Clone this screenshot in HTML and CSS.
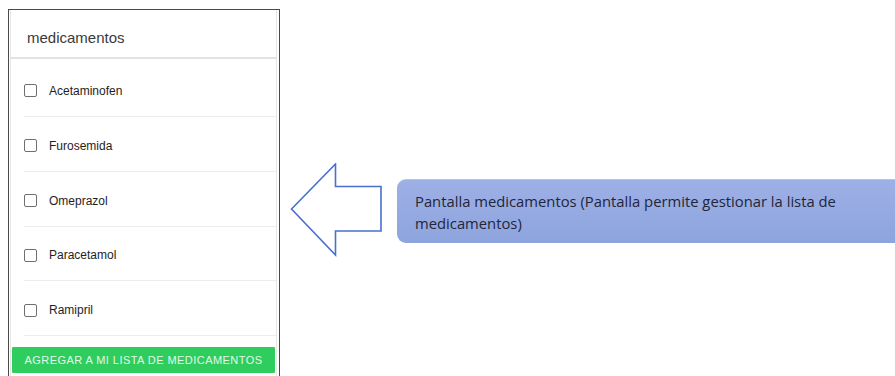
FILE: index.html
```html
<!DOCTYPE html>
<html lang="es">
<head>
<meta charset="utf-8">
<title>Pantalla medicamentos</title>
<link rel="stylesheet" href="styles.css">
</head>
<body>
<div class="stage">
  <div class="phone">
    <div class="panel">
      <div class="header">medicamentos</div>
      <ul class="list">
        <li class="item"><span class="box"></span><span class="label">Acetaminofen</span></li>
        <li class="item"><span class="box"></span><span class="label">Furosemida</span></li>
        <li class="item"><span class="box"></span><span class="label">Omeprazol</span></li>
        <li class="item"><span class="box"></span><span class="label">Paracetamol</span></li>
        <li class="item"><span class="box"></span><span class="label">Ramipril</span></li>
      </ul>
      <div class="btn">AGREGAR A MI LISTA DE MEDICAMENTOS</div>
    </div>
  </div>
  <svg class="arrow" width="96" height="96" viewBox="0 0 96 96">
    <polygon points="1.5,46 45.5,1 45.5,23.5 91,23.5 91,68 45.5,68 45.5,92" fill="#ffffff" stroke="#4a6fd0" stroke-width="1.6" stroke-linejoin="miter"/>
  </svg>
  <div class="callout">Pantalla medicamentos (Pantalla permite gestionar la lista de medicamentos)</div>
</div>
</body>
</html>
```

FILE: styles.css
```css
html, body {
  margin: 0;
  padding: 0;
  background: #ffffff;
  overflow: hidden;
}
.stage {
  width: 895px;
  height: 376px;
  display: flex;
  align-items: flex-start;
}
.phone {
  margin-left: 8px;
  margin-top: 9px;
  width: 267px;
  height: 380px;
  border: 1.5px solid #4a4a4a;
  border-bottom: none;
  padding: 0 2px 0 1px;
  flex: none;
}
.panel {
  height: 100%;
  background: #fff;
  border-left: 1px solid #e6e6e6;
  border-right: 1px solid #e6e6e6;
  font-family: "Liberation Sans", Arial, sans-serif;
  display: flex;
  flex-direction: column;
}
.header {
  height: 49px;
  box-sizing: border-box;
  padding: 19px 0 0 16px;
  font-size: 15px;
  color: #3a3a3a;
  border-bottom: 2px solid #e2e2e2;
  line-height: 17px;
}
.list {
  list-style: none;
  margin: 0;
  padding: 0 0 0 13px;
}
.item {
  height: 54.75px;
  border-bottom: 1px solid #ececec;
  display: flex;
  align-items: center;
  padding-top: 4px;
  box-sizing: border-box;
}
.item:first-child {
  height: 58px;
  padding-top: 6px;
}
.box {
  width: 13px;
  height: 13px;
  box-sizing: border-box;
  border: 1.5px solid #6f6f6f;
  border-radius: 2px;
  margin-left: 0;
  margin-right: 12px;
  flex: none;
}
.label {
  font-size: 12px;
  color: #1e1e1e;
}
.btn {
  margin: 11px 1px 0 1px;
  height: 26px;
  background: #2fcc5e;
  color: #e3f9ea;
  font-size: 11px;
  letter-spacing: 0.45px;
  display: flex;
  align-items: center;
  justify-content: center;
  border-radius: 1px;
}
.arrow {
  margin-left: 10px;
  margin-top: 163px;
  flex: none;
}
.callout {
  margin-left: 11px;
  margin-top: 179px;
  flex: 1;
  height: 64px;
  box-sizing: border-box;
  padding: 10px 0 0 18px;
  border-radius: 9px 0 0 9px;
  background: linear-gradient(180deg, #9db0e6 0%, #8ea4dd 100%);
  border-top: 1px solid #b4c3ee;
  font-family: "Open Sans", sans-serif;
  font-size: 14.8px;
  line-height: 22px;
  color: #22263a;
  padding-right: 30px;
}
```
